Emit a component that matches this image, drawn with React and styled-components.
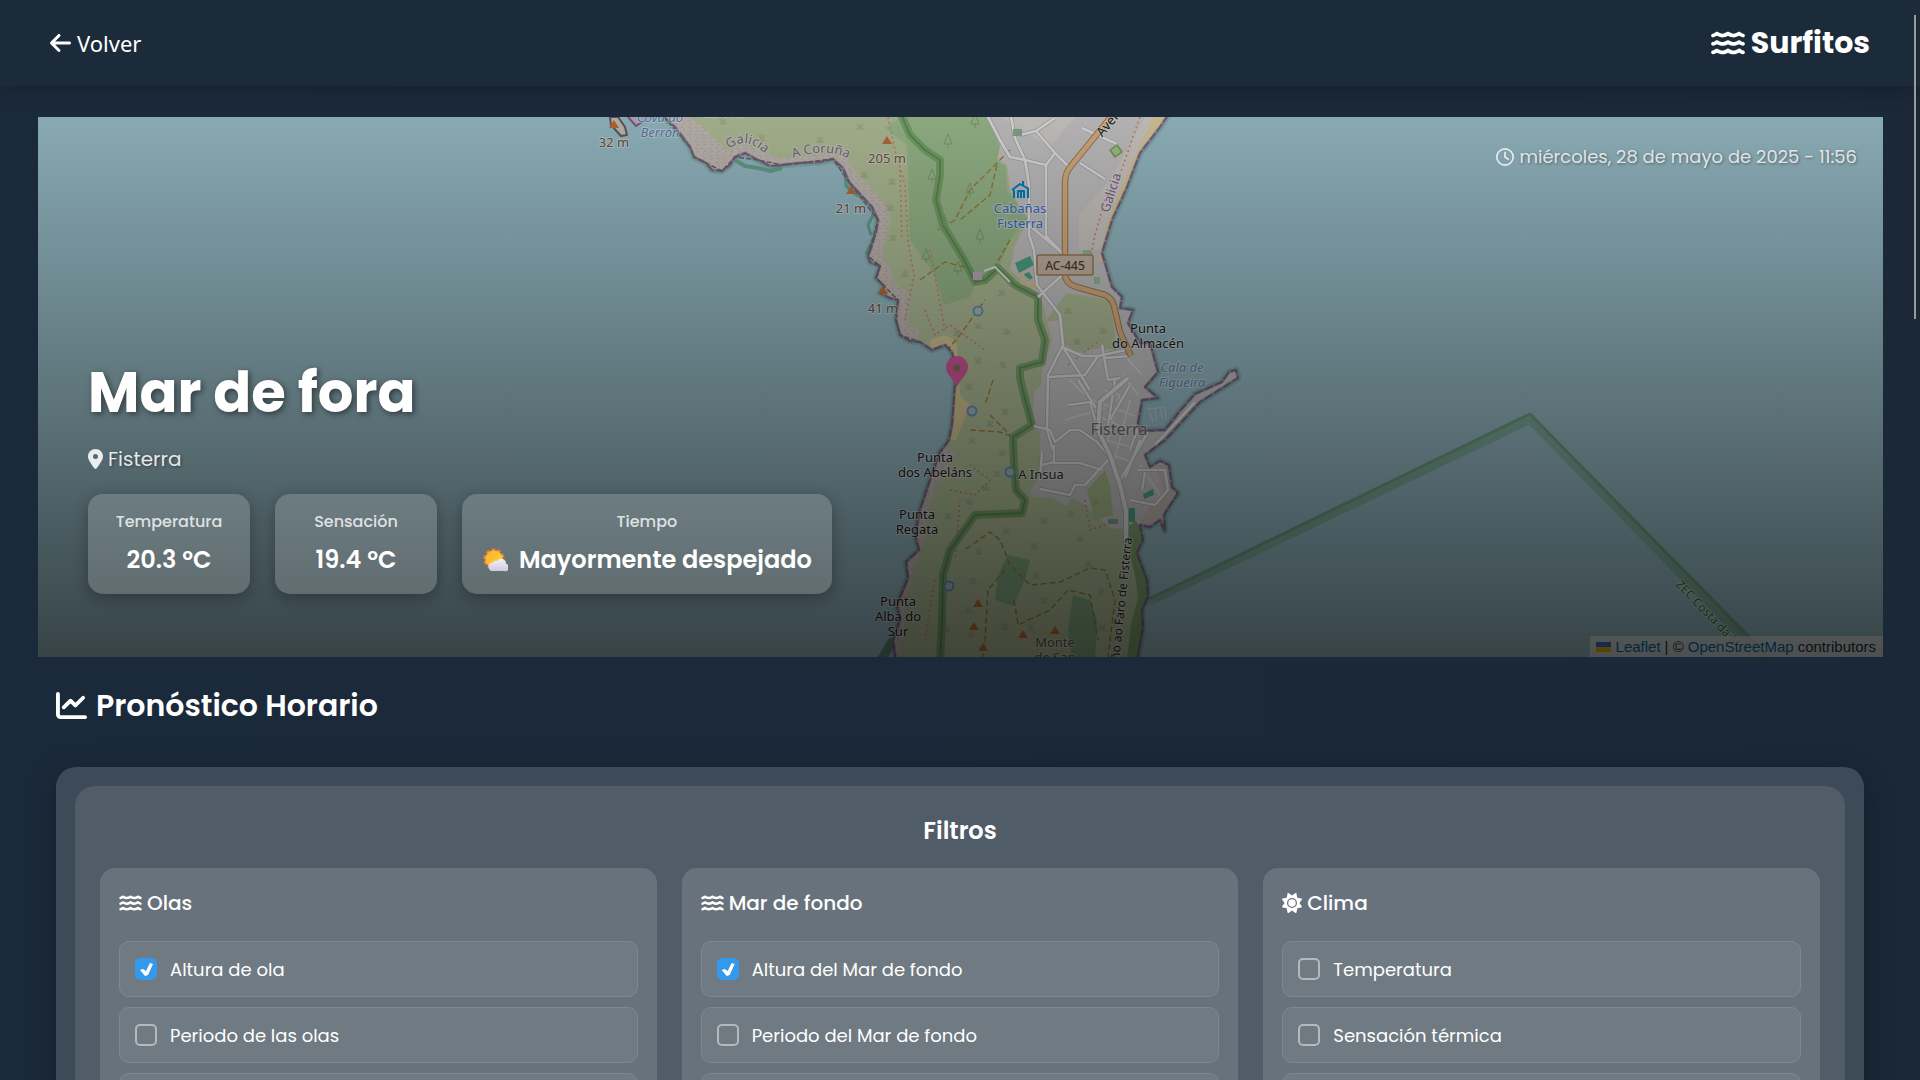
import React from "react";
import styled, { createGlobalStyle } from "styled-components";
import {
  FaArrowLeft,
  FaWater,
  FaRegClock,
  FaLocationDot,
  FaChartLine,
  FaSun,
} from "react-icons/fa6";

const GlobalStyle = createGlobalStyle`
  *, *::before, *::after { box-sizing: border-box; }
  body {
    margin: 0;
    background: #1b2838;
    color: #fff;
    font-family: Poppins, Inter, "Noto Sans", sans-serif;
  }
  h1, h2, h3, h4, p { margin: 0; }
`;

const Page = styled.div`
  height: 100vh;
  overflow-y: auto;
  scrollbar-width: none;
  background: linear-gradient(90deg, #1b2a3b, #1b2838);
`;

const ScrollThumb = styled.div`
  position: fixed;
  top: 15px;
  right: 4px;
  width: 2px;
  height: 304px;
  background: #9a9a9a;
`;

const Header = styled.header`
  display: flex;
  align-items: center;
  justify-content: space-between;
  height: 86px;
  padding: 0 50px;
  background: #1c2b3a;
  box-shadow: 0 4px 20px rgba(0, 0, 0, 0.2);
`;

const BackButton = styled.button`
  display: flex;
  align-items: center;
  gap: 6px;
  padding: 0;
  border: 0;
  background: none;
  color: #fff;
  font: 400 22px/30px "Noto Sans", sans-serif;
  cursor: pointer;

  svg {
    width: 21px;
    height: 24px;
  }
`;

const Brand = styled.a`
  display: flex;
  align-items: center;
  gap: 6px;
  color: #fff;
  font-size: 30px;
  line-height: 40px;
  font-weight: 700;
  text-decoration: none;

  svg {
    width: 34px;
    height: 30px;
  }
`;

const Main = styled.main`
  padding: 31px 37px 38px 38px;
`;

const Hero = styled.section`
  position: relative;
  display: flex;
  flex-direction: column;
  justify-content: space-between;
  height: 50vh;
  min-height: 540px;
  overflow: hidden;
  background: #aad3df;
`;

const MapLayer = styled.div`
  position: absolute;
  inset: 0;

  svg {
    display: block;
    width: 100%;
    height: 100%;
  }

  &::after {
    content: "";
    position: absolute;
    inset: 0;
    background: linear-gradient(rgba(0, 0, 0, 0.2), rgba(0, 0, 0, 0.68));
  }
`;

const Attribution = styled.div`
  position: absolute;
  right: 0;
  bottom: 0;
  display: flex;
  align-items: center;
  gap: 4px;
  height: 21px;
  padding: 0 7px 0 6px;
  background: rgba(255, 255, 255, 0.8);
  color: #333;
  font: 15px/21px "Liberation Sans", Arial, sans-serif;

  a {
    color: #0078a8;
    text-decoration: none;
  }

  a svg {
    display: inline-block;
    width: 15px;
    height: 10px;
    margin-right: 5px;
  }
`;

const DateLine = styled.p`
  position: relative;
  display: flex;
  align-items: center;
  align-self: flex-end;
  gap: 5px;
  padding: 27px 26px 0 0;
  font-size: 18px;
  line-height: 26px;
  color: rgba(255, 255, 255, 0.8);
  text-shadow: 1px 1px 3px rgba(0, 0, 0, 0.4);
`;

const HeroInfo = styled.div`
  position: relative;
  padding: 0 50px 63px;
`;

const SpotName = styled.h1`
  font-size: 56px;
  line-height: 84px;
  font-weight: 700;
  text-shadow: 2px 2px 6px rgba(0, 0, 0, 0.5);
`;

const Place = styled.p`
  display: flex;
  align-items: center;
  gap: 5px;
  margin: 9px 0 20px;
  font-size: 20px;
  line-height: 30px;
  color: rgba(255, 255, 255, 0.88);
  text-shadow: 1px 1px 3px rgba(0, 0, 0, 0.4);

  svg {
    width: 15px;
    height: 20px;
  }
`;

const Stats = styled.div`
  display: flex;
  gap: 25px;
`;

const Stat = styled.div`
  display: flex;
  flex-direction: column;
  align-items: center;
  gap: 6px;
  min-width: 162px;
  height: 100px;
  padding: 15px 20px;
  border-radius: 15px;
  background: rgba(255, 255, 255, 0.17);
  box-shadow: 0 4px 15px rgba(0, 0, 0, 0.3);
`;

const StatLabel = styled.span`
  font-size: 16px;
  line-height: 26px;
  font-weight: 500;
  color: rgba(255, 255, 255, 0.8);
`;

const StatValue = styled.span`
  display: flex;
  align-items: center;
  gap: 11px;
  font-size: 24px;
  line-height: 38px;
  font-weight: 600;
  white-space: nowrap;
`;

const Forecast = styled.section`
  padding: 0 19px 0 18px;
`;

const SectionTitle = styled.h2`
  display: flex;
  align-items: center;
  gap: 9px;
  padding: 26px 0 39px;
  font-size: 30px;
  line-height: 45px;
  font-weight: 600;
`;

const Panel = styled.div`
  padding: 19px;
  border-radius: 20px;
  background: #3d4a57;
  box-shadow: 0 8px 32px rgba(0, 0, 0, 0.3);
`;

const Filters = styled.div`
  padding: 25px;
  border-radius: 20px;
  background: #505c68;
`;

const FiltersTitle = styled.h3`
  margin-bottom: 17px;
  font-size: 24px;
  line-height: 40px;
  font-weight: 600;
  text-align: center;
`;

const Columns = styled.div`
  display: grid;
  grid-template-columns: repeat(3, 1fr);
  gap: 25px;
`;

const Group = styled.div`
  padding: 19px;
  border-radius: 15px;
  background: #68727c;
`;

const GroupTitle = styled.h4`
  display: flex;
  align-items: center;
  gap: 5px;
  margin-bottom: 22px;
  font-size: 20px;
  line-height: 32px;
  font-weight: 500;
`;

const WaterIcon = styled(FaWater)`
  width: 23px;
  height: 20px;
`;

const SunIcon = styled(FaSun)`
  width: 20px;
  height: 20px;
`;

const Options = styled.div`
  display: flex;
  flex-direction: column;
  gap: 10px;
`;

const Option = styled.label`
  display: flex;
  align-items: center;
  gap: 13px;
  height: 56px;
  padding: 0 15px;
  border: 1px solid #7e8890;
  border-radius: 10px;
  background: #707a82;
  font-size: 18px;
  cursor: pointer;
`;

const Check = styled.input`
  appearance: none;
  width: 22px;
  height: 22px;
  margin: 0;
  border: 2px solid #b4b9bd;
  border-radius: 5px;
  cursor: pointer;

  &:checked {
    border: 0;
    background: #3498eb;
  }

  &:checked::after {
    content: "";
    display: block;
    width: 22px;
    height: 22px;
    background: #fff;
    clip-path: polygon(5px 12px, 8px 11px, 11px 13px, 15px 5px, 18px 6px, 13px 17px, 10px 18px);
  }
`;

const GROUPS = [
  {
    title: "Olas",
    icon: <WaterIcon />,
    options: [
      ["Altura de ola", true],
      ["Periodo de las olas", false],
      ["Dirección de las olas", false],
    ],
  },
  {
    title: "Mar de fondo",
    icon: <WaterIcon />,
    options: [
      ["Altura del Mar de fondo", true],
      ["Periodo del Mar de fondo", false],
      ["Dirección del Mar de fondo", false],
    ],
  },
  {
    title: "Clima",
    icon: <SunIcon />,
    options: [
      ["Temperatura", false],
      ["Sensación térmica", false],
      ["Precipitación", false],
    ],
  },
];

const LAND =
  "M664 117L675 127 690 147 694 157 706 163 712 170 722 171 730 165 735 157 745 153 758 160 770 166 782 165 800 163 820 162 833 159 843 168 849 182 860 194 872 207 878 220 876 232 872 245 868 256 870 262 880 266 876 278 884 286 880 293 890 298 898 300 896 320 900 335 910 341 920 342 932 350 945 345 952 352 956 368 955 385 952 425 949 440 940 452 930 480 920 510 915 535 919 550 906 562 908 578 897 605 900 620 893 640 896 662 1137 662 1143 627 1142 610 1148 597 1147 580 1137 553 1143 540 1140 525 1150 527 1160 520 1165 531 1164 515 1167 510 1178 493 1172 487 1169 465 1160 461 1150 467 1145 455 1165 440 1200 402 1238 378 1236 370 1229 372 1222 382 1195 394 1180 411 1165 430 1140 431 1138 423 1142 400 1158 398 1145 387 1158 372 1150 343 1140 343 1128 323 1133 310 1120 308 1122 297 1112 287 1107 270 1102 253 1112 220 1127 187 1140 153 1160 127 1170 112 664 112Z";

const GREEN_EDGE =
  "M900 112L910 135 925 150 940 160 940 175 936 200 943 225 963 258 975 282 985 280 998 268 1015 285 1038 297 1038 320 1045 340 1042 362 1020 368 1020 378 1024 395 1032 425 1013 437 1014 465 1016 490 1025 500 1022 513 975 515 950 550 943 575 942 620 940 662";

const ROADS = [
  "M988 117L1000 140 1010 157 1025 160 1029 185 1029 235 1034 250 1037 285 1060 315 1063 345 1048 375 1047 430 1053 450",
  "M1010 112L1015 138 1025 160 1046 165 1055 153 1036 131 1020 135",
  "M1036 131L1055 118",
  "M1055 153L1070 168M1046 165V236L1062 253M1029 225L1062 253",
  "M1080 163L1105 179M1082 128L1117 144",
  "M1038 297L1068 270M1048 377L1085 375 1098 356 1083 356 1062 347M1063 347L1090 390",
  "M1102 345L1108 380 1120 378M1098 356L1126 350M1104 358L1130 356",
  "M1034 426L1050 430 1055 442 1070 430 1080 430 1097 442 1112 460M1042 452L1040 480M1054 445V462L1042 465",
  "M1053 463L1080 463 1102 470M1040 489L1070 495 1075 485 1085 485 1108 460",
  "M1078 380L1096 408M1068 405L1090 402 1098 430 1110 455M1115 380L1108 425",
  "M1130 385L1110 420M1148 400L1130 450M1155 420L1120 480M1140 440L1125 478M1145 431L1195 394M1155 445L1195 402",
  "M1138 470L1165 470 1168 490 1155 505 1130 500M1145 472L1142 490",
];

const STREETS = [
  "M1092 400L1135 416M1095 415L1130 430M1104 440L1133 447M1112 455L1133 462M1120 395L1105 450M1130 400L1112 470M1065 420L1105 408M1070 380L1085 395M1120 350L1142 375M1123 375L1138 395M1104 390L1120 395M1140 465L1162 498",
];

const PATHS = [
  "M1010 150L980 180 970 190 955 220 938 230M997 165L990 195 960 220M1010 240L990 275M920 280L945 262 975 270M935 365L960 335 985 300M990 415L1010 435M970 430L1000 432 1013 437M993 380L985 405",
  "M966 549L990 532 1000 540 1010 565 1030 585 1060 582 1090 568 1105 570 1115 600 1108 657M1005 570L988 590 985 640 983 657M1014 600L1018 625 1050 610 1068 590 1090 595 1098 640",
];

const RED_PATHS = [
  "M888 117L895 150 905 185 908 240 914 275 905 320M900 170L902 240M925 310L935 335 950 325 985 350M1140 117L1118 180 1105 200 1095 235 1090 260M950 490L975 495 990 480 970 465M960 500L955 560M935 580L925 640M1085 500L1090 530 1105 525M1068 365L1100 340M930 250L945 330",
];

const SCRUB = [
  [723, 121], [762, 137], [820, 139], [860, 126], [864, 174], [892, 181], [890, 207], [893, 237],
  [905, 273], [1002, 292], [978, 325], [1007, 331], [1068, 310], [1103, 330], [1077, 341], [957, 332],
  [978, 360], [1003, 364], [969, 386], [1005, 411], [990, 423], [972, 440], [1002, 452], [997, 473],
  [986, 487], [969, 501], [948, 515], [1006, 530], [1044, 520], [1071, 513], [1096, 501], [979, 551],
  [1034, 545], [1080, 538], [1036, 575], [973, 580], [1088, 563], [1101, 591], [1044, 600], [968, 609],
  [947, 629], [1005, 626], [1031, 627], [971, 634], [1102, 627],
];

const TREES = [[948, 140], [975, 120], [970, 189], [980, 235], [944, 220], [926, 255], [958, 267], [932, 175]];

const PEAKS = [[614, 124], [887, 140], [851, 190], [883, 290], [978, 603], [974, 626], [983, 647], [1023, 634], [1055, 630]];

const SPRINGS = [[978, 311], [972, 411], [1010, 472], [949, 586]];

function Label({ x, y, lines, fill = "#222", size = 13, italic, rotate, anchor = "middle" }) {
  return (
    <text
      x={x}
      y={y}
      fill={fill}
      fontSize={size}
      fontStyle={italic ? "italic" : "normal"}
      textAnchor={anchor}
      stroke="rgba(255,255,255,.5)"
      strokeWidth="2"
      paintOrder="stroke"
      transform={rotate ? `rotate(${rotate} ${x} ${y})` : undefined}
    >
      {lines.map((line, i) => (
        <tspan key={line} x={x} dy={i ? 15 : 0}>
          {line}
        </tspan>
      ))}
    </text>
  );
}

function SpotMap() {
  return (
    <svg
      viewBox="38 117 1845 540"
      preserveAspectRatio="xMidYMid slice"
      fontFamily='"Noto Sans", sans-serif'
      fill="none"
      strokeLinejoin="round"
      role="img"
      aria-label="Mapa de Fisterra"
    >
      <defs>
        <clipPath id="land">
          <path d={LAND} />
        </clipPath>
        <pattern id="rock" width="7" height="7" patternUnits="userSpaceOnUse">
          <rect width="7" height="7" fill="#ddd3cc" />
          <path d="M1 2l2-1 2 2M3 6l2-2 1 1" stroke="#cbc2bc" strokeWidth="1" />
        </pattern>
        <path id="coruna" d="M793 158Q825 147 850 159" />
        <path id="galicia" d="M729 149Q747 134 768 157" />
      </defs>

      <path d={LAND} stroke="#84bcab" strokeWidth="7" opacity=".6" />
      <path d="M735 160L745 166 758 168 770 171 782 168" stroke="#74b59e" strokeWidth="4" />
      <path d="M845 172L846 186 858 196M873 215L868 225 871 235M871 243L866 254" stroke="#74b59e" strokeWidth="3" />
      <path d="M1149 602L1530 420 1748 643 1765 660" stroke="#8fc3b0" strokeWidth="8" />
      <path d="M1149 599L1530 414 1752 640 1770 660" stroke="#7ab496" strokeWidth="3" />
      <path d="M880 662L893 640" stroke="#6b9d86" strokeWidth="9" />
      <path d={LAND} fill="#c8d7ab" />

      <g clipPath="url(#land)">
        <path
          d="M988 117L997 145 998 160 1007 165 1010 190 1028 220 1015 245 1010 270 1035 292 1043 305 1052 340 1042 370 1041 385 1034 392 1032 425 1040 432 1040 475 1030 492 1035 497 1052 498 1067 506 1072 498 1085 505 1110 528 1130 530 1200 530 1260 360 1180 112Z"
          fill="#dfdddd"
        />
        <path d="M1000 117L1050 147 1075 117ZM1079 215L1110 180 1145 117 1175 117 1110 250 1079 250Z" fill="#eae5e0" />
        <path d="M1157 112L1140 145 1124 180 1108 220 1098 262 1107 262 1110 225 1132 175 1170 112Z" fill="#f5e4ac" />
        <path
          d="M908 112L885 128 907 145 910 240 935 275 944 305 970 297 975 285 1000 265 1010 240 1028 218 1007 190 1006 166 997 160 1000 146 988 112Z"
          fill="#add19e"
        />
        <path d="M1066 293L1110 300 1117 350 1100 348 1078 352 1064 345 1062 320 1045 322Z" fill="#c8d7ab" />
        <path d="M1105 470L1110 485 1113 515 1095 520 1087 490Z" fill="#bed39d" />
        <path d="M1008 555L1030 560 1025 580 1013 606 995 600 998 575Z" fill="#98c193" />
        <path d="M1073 595L1090 600 1097 620 1095 662 1072 662 1068 630Z" fill="#98c193" />
        <path
          d="M664 117L675 127 690 147 706 163 722 171 740 150 780 165 833 159"
          stroke="url(#rock)"
          strokeWidth="12"
        />
        <path
          d="M833 159L849 182 872 207 878 220 872 245 870 262 880 275 884 290 898 300 896 320 900 335 915 342"
          stroke="url(#rock)"
          strokeWidth="24"
        />
        <path d="M672 112L695 120 725 148 736 156 720 172 700 165Z" fill="url(#rock)" />
        <path d="M950 450L930 480 920 510 915 545 906 570 897 605 893 660" stroke="url(#rock)" strokeWidth="16" />
        <path d="M930 340Q950 330 957 345L960 395 970 405 956 440 949 440 953 380Q952 352 930 350Z" fill="#f3e2aa" />
        <path d="M1155 465L1170 465 1178 493 1160 530 1140 523 1150 505 1165 495Z" fill="#d9d0c8" />

        {RED_PATHS.map((d) => (
          <path key={d} d={d} stroke="#e88a7d" strokeWidth="1.5" strokeDasharray="2 3" />
        ))}
        {PATHS.map((d) => (
          <path key={d} d={d} stroke="#b08f3a" strokeWidth="1.4" strokeDasharray="6 3" />
        ))}
        <path d={GREEN_EDGE} stroke="#7fb071" strokeWidth="8" opacity=".8" />
        <path d={GREEN_EDGE} stroke="#68a05c" strokeWidth="2" />
        <path d="M1130 525L1140 540 1137 553 1143 580 1145 600 1138 625 1134 660" stroke="#7fb071" strokeWidth="14" opacity=".8" />

        {SCRUB.map(([x, y]) => (
          <path key={`${x}-${y}`} d={`M${x - 4} ${y + 3}h8M${x} ${y + 3}v-6M${x - 1} ${y + 2}l-2-4M${x + 1} ${y + 2}l2-4`} stroke="#acba92" strokeWidth="1" />
        ))}
        {TREES.map(([x, y]) => (
          <path key={`${x}-${y}`} d={`M${x} ${y - 6}l4 10h-8zM${x} ${y + 4}v4`} stroke="#8cb27f" strokeWidth="1" />
        ))}

        {STREETS.map((d) => (
          <path key={d} d={d} stroke="#f4f4f4" strokeWidth="1.5" />
        ))}
        {ROADS.map((d) => (
          <path key={d} d={d} stroke="#bcbcbc" strokeWidth="4" />
        ))}
        {ROADS.map((d) => (
          <path key={d} d={d} stroke="#fff" strokeWidth="2.6" />
        ))}
        <path d="M1128 378L1100 402 1098 430 1110 455 1120 485 1126 510 1126 540" stroke="#c4c4c4" strokeWidth="6" />
        <path d="M1128 378L1100 402 1098 430 1110 455 1120 485 1126 510 1126 540" stroke="#fff" strokeWidth="4" />
        <path d="M1126 540L1123 600 1115 662" stroke="#dcdcd0" strokeWidth="2" />
        <path d="M984 271L995 267 1010 282" stroke="#fff" strokeWidth="2" />
      </g>

      <path d="M1115 112L1071 166Q1065 173 1065 182V275Q1066 285 1080 288L1105 295Q1112 298 1114 306L1120 332 1131 356" stroke="#b58a50" strokeWidth="6.5" />
      <path d="M1115 112L1071 166Q1065 173 1065 182V275Q1066 285 1080 288L1105 295Q1112 298 1114 306L1120 332 1131 356" stroke="#f2c795" strokeWidth="4.5" />

      <path d={LAND} stroke="#8f6f9f" strokeWidth="3" opacity=".5" />
      <path d={LAND} stroke="#806590" strokeWidth="2" strokeDasharray="9 2" opacity=".8" />
      <path d="M664 117L690 147 694 157 706 163 722 171 735 157 758 160 782 165 833 159 849 182 878 220 868 256 880 266 876 278 898 300 896 320 900 335 920 342" stroke="#77716f" strokeWidth="1.5" strokeDasharray="5 2" />
      <path d="M610 117L611 125 621 136 627 135 625 127 618 117Z" fill="#ddd3cc" stroke="#6e6660" strokeWidth="2" />
      <path d="M628 117L636 126 645 120" fill="#d5bdd2" stroke="#8a6a9b" strokeWidth="2" />
      <path d="M1149 409L1153 422M1155 408L1157 421M1160 408L1163 420M1165 407L1166 420M1147 409L1165 407" stroke="#d8e4e6" strokeWidth="1" />

      <path d="M1015 263L1030 256 1034 265 1019 273Z" fill="#57ba98" />
      <path d="M1024 274L1029 272 1033 278 1028 281Z" fill="#57ba98" />
      <path d="M1020 274L1032 282 1035 288 1021 283Z" stroke="#eddd95" strokeWidth="2" />
      <rect x="973" y="272" width="9" height="8" fill="#d8c5d8" />
      <rect x="1129" y="508" width="6" height="14" fill="#57ba98" />
      <path d="M1143 494L1153 489 1154 495 1144 499Z" fill="#57ba98" />
      <rect x="1108" y="519" width="10" height="5" fill="#8bb79d" />
      <path d="M1110 150L1117 145 1122 152 1115 157Z" fill="#b5dba0" stroke="#7fb360" strokeWidth="1.5" />
      <rect x="1013" y="129" width="9" height="7" fill="#9bbd9e" />
      <path d="M1083 250h8v7h-8zM1094 277h6v7h-6z" fill="#a4d3ad" />

      {PEAKS.map(([x, y]) => (
        <path key={`${x}-${y}`} d={`M${x} ${y - 4}l5 8h-10z`} fill="#d5793f" />
      ))}
      {SPRINGS.map(([x, y]) => (
        <circle key={`${x}-${y}`} cx={x} cy={y} r="4.5" fill="#c3d3c4" stroke="#6fa3d6" strokeWidth="2" />
      ))}
      <g stroke="#0092da" strokeWidth="2">
        <path d="M1012 190L1020 184 1029 189M1014 190V198M1028 189V198M1018 198V191H1024V198M1021 191V198M1023 181V186" />
      </g>

      <Label x={614} y={147} lines={["32 m"]} fill="#7a5a4a" />
      <Label x={660} y={122} lines={["Cova do", "Berrón"]} fill="#5f8fc4" italic />
      <Label x={724} y={117} lines={["234 m"]} fill="#7a5a4a" />
      <Label x={887} y={163} lines={["205 m"]} fill="#7a5a4a" />
      <Label x={851} y={213} lines={["21 m"]} fill="#7a5a4a" />
      <Label x={883} y={313} lines={["41 m"]} fill="#7a5a4a" />
      <g fill="#8a6fa0" fontSize="13" stroke="rgba(255,255,255,.4)" strokeWidth="2">
        <text paintOrder="stroke"><textPath href="#galicia">Galicia</textPath></text>
        <text paintOrder="stroke"><textPath href="#coruna">A Coruña</textPath></text>
      </g>
      <Label x={1115} y={194} lines={["Galicia"]} fill="#8a6fa0" rotate={-72} />
      <Label x={1112} y={126} lines={["Aven"]} rotate={-50} />
      <Label x={1020} y={213} lines={["Cabañas", "Fisterra"]} fill="#3a7be0" />
      <rect x="1037" y="255" width="56" height="20" rx="2" fill="#e0cdbd" stroke="#b08a5c" strokeWidth="1.5" />
      <text x="1065" y="270" textAnchor="middle" fontSize="12" fontWeight="500" fill="#5a4530">AC-445</text>
      <Label x={1148} y={333} lines={["Punta", "do Almacén"]} />
      <Label x={1182} y={372} lines={["Cala de", "Figueira"]} fill="#6797c8" italic />
      <Label x={1119} y={435} lines={["Fisterra"]} fill="#777" size={16} />
      <Label x={935} y={462} lines={["Punta", "dos Abeláns"]} />
      <Label x={1041} y={479} lines={["A Insua"]} fill="#333" />
      <Label x={917} y={519} lines={["Punta", "Regata"]} />
      <Label x={898} y={606} lines={["Punta", "Alba do", "Sur"]} />
      <Label x={1055} y={647} lines={["Monte", "de San"]} fill="#6b564c" />
      <Label x={1132} y={538} lines={["Camiño ao Faro de Fisterra"]} size={12} rotate={-84} anchor="end" />
      <Label x={1675} y={585} lines={["ZEC Costa da Morte"]} fill="#2b8c2b" size={12} rotate={46} anchor="start" />

      <path d="M957 387C954 379 946 375 946 367A11 11 0 0 1 968 367C968 375 960 379 957 387Z" fill="#f064b0" />
      <circle cx="957" cy="368" r="3.500" fill="#9a7a68" />
    </svg>
  );
}

function SunCloud() {
  return (
    <svg width="26" height="24" viewBox="2 0 26 26" aria-hidden="true">
      <defs>
        <linearGradient id="sun" x1="0" y1="0" x2="1" y2="1">
          <stop offset="0" stopColor="#ffb02e" />
          <stop offset="1" stopColor="#f9d23c" />
        </linearGradient>
        <linearGradient id="cloud" x1="0" y1="0" x2="0" y2="1">
          <stop offset="0" stopColor="#f3f2f6" />
          <stop offset="1" stopColor="#cfc8e2" />
        </linearGradient>
      </defs>
      <circle cx="14" cy="12" r="10" fill="none" stroke="#f47f2f" strokeWidth="3" strokeDasharray="4 2.280" />
      <circle cx="14" cy="12" r="9.500" fill="url(#sun)" />
      <path d="M13 25a4.500 4.500 0 0 1-1-9 5 5 0 0 1 5-2 5.500 5.500 0 0 1 10 3 4 4 0 0 1-2 8Z" fill="url(#cloud)" />
    </svg>
  );
}

export default function App() {
  return (
    <Page>
      <GlobalStyle />
      <Header>
        <BackButton type="button">
          <FaArrowLeft />
          Volver
        </BackButton>
        <Brand href="#">
          <FaWater />
          Surfitos
        </Brand>
      </Header>

      <Main>
        <Hero>
          <MapLayer>
            <SpotMap />
            <Attribution>
              <a href="#leaflet">
                <svg viewBox="0 0 15 10" aria-hidden="true">
                  <path fill="#4c7be1" d="M0 0h15v5H0z" />
                  <path fill="#ffd500" d="M0 5h15v5H0z" />
                </svg>
                Leaflet
              </a>
              <span>| ©</span>
              <a href="#osm">OpenStreetMap</a>
              <span>contributors</span>
            </Attribution>
          </MapLayer>
          <DateLine>
            <FaRegClock size={18} />
            miércoles, 28 de mayo de 2025 - 11:56
          </DateLine>
          <HeroInfo>
            <SpotName>Mar de fora</SpotName>
            <Place>
              <FaLocationDot />
              Fisterra
            </Place>
            <Stats>
              <Stat>
                <StatLabel>Temperatura</StatLabel>
                <StatValue>20.3 ºC</StatValue>
              </Stat>
              <Stat>
                <StatLabel>Sensación</StatLabel>
                <StatValue>19.4 ºC</StatValue>
              </Stat>
              <Stat>
                <StatLabel>Tiempo</StatLabel>
                <StatValue>
                  <SunCloud />
                  Mayormente despejado
                </StatValue>
              </Stat>
            </Stats>
          </HeroInfo>
        </Hero>

        <Forecast>
          <SectionTitle>
            <FaChartLine size={31} />
            Pronóstico Horario
          </SectionTitle>
          <Panel>
            <Filters>
              <FiltersTitle>Filtros</FiltersTitle>
              <Columns>
                {GROUPS.map((group) => (
                  <Group key={group.title}>
                    <GroupTitle>
                      {group.icon}
                      {group.title}
                    </GroupTitle>
                    <Options>
                      {group.options.map(([label, checked]) => (
                        <Option key={label}>
                          <Check type="checkbox" defaultChecked={checked} />
                          {label}
                        </Option>
                      ))}
                    </Options>
                  </Group>
                ))}
              </Columns>
            </Filters>
          </Panel>
        </Forecast>
      </Main>
      <ScrollThumb />
    </Page>
  );
}
